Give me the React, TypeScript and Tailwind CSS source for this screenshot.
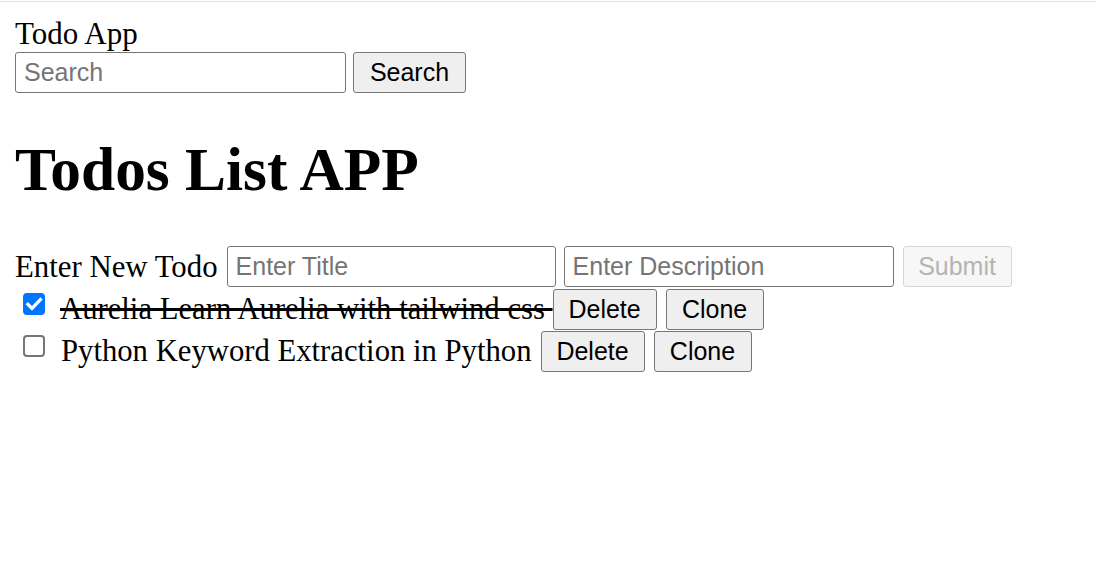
import React from "react";

const btn =
  "h-[41px] shrink-0 rounded-[3px] border border-[#767676] bg-[#efefef] font-['Liberation_Sans',Arial,sans-serif] text-[25px] leading-none text-black";

const inp =
  "h-[41px] shrink-0 rounded-[3px] border border-[#767676] bg-white pl-[8px] font-['Liberation_Sans',Arial,sans-serif] text-[25px] text-black outline-none placeholder:text-[#757575]";

function CheckBox({ checked }: { checked: boolean }) {
  if (checked) {
    return (
      <div className="mb-[10px] ml-[8px] flex h-[22px] w-[22px] shrink-0 items-center justify-center rounded-[4px] bg-[#0075ff]">
        <svg width="22" height="22" viewBox="0 0 22 22">
          <polyline
            points="4.8,11.2 9,15.4 17.4,6.6"
            fill="none"
            stroke="white"
            strokeWidth="3.2"
            strokeLinecap="square"
          />
        </svg>
      </div>
    );
  }
  return (
    <div className="mb-[10px] ml-[8px] h-[22px] w-[22px] shrink-0 rounded-[4px] border-2 border-[#767676] bg-white" />
  );
}

export default function App() {
  return (
    <div className="min-h-screen bg-white font-['Liberation_Serif','Times_New_Roman',serif] text-[30.8px] text-black">
      <div className="mt-px h-px bg-[#dedede]" />
      <div className="px-[15px]">
        <div className="mt-[15px] text-[31px] leading-[34px]">Todo App</div>
        <div className="mt-px flex items-center gap-[7px]">
          <input className={`${inp} w-[331px]`} placeholder="Search" />
          <button className={`${btn} w-[113px]`}>Search</button>
        </div>

        <h1 className="mt-[42px] text-[61.4px] font-bold leading-[69px]">Todos List APP</h1>

        <div className="mt-[42px] flex h-[41px] items-center">
          <span className="leading-[34px]">Enter New Todo</span>
          <input className={`${inp} ml-[9px] w-[329px]`} placeholder="Enter Title" />
          <input className={`${inp} ml-[8px] w-[330px]`} placeholder="Enter Description" />
          <button
            disabled
            className="ml-[9px] h-[41px] w-[109px] shrink-0 rounded-[3px] border border-[#d6d6d6] bg-[#f7f7f7] font-['Liberation_Sans',Arial,sans-serif] text-[25px] leading-none text-[#b4b4b4]"
          >
            Submit
          </button>
        </div>

        <div className="mt-px">
          <div className="flex h-[42px] items-center">
            <CheckBox checked />
            <span className="ml-[15px] whitespace-pre text-[30.7px] leading-[34px] line-through">
              {"Aurelia Learn Aurelia with tailwind css "}
            </span>
            <button className={`${btn} w-[104px]`}>Delete</button>
            <button className={`${btn} ml-[9px] w-[98px]`}>Clone</button>
          </div>
          <div className="flex h-[42px] items-center">
            <CheckBox checked={false} />
            <span className="ml-[16px] whitespace-pre text-[30.7px] leading-[34px]">Python Keyword Extraction in Python</span>
            <button className={`${btn} ml-[9px] w-[104px]`}>Delete</button>
            <button className={`${btn} ml-[9px] w-[98px]`}>Clone</button>
          </div>
        </div>
      </div>
    </div>
  );
}
